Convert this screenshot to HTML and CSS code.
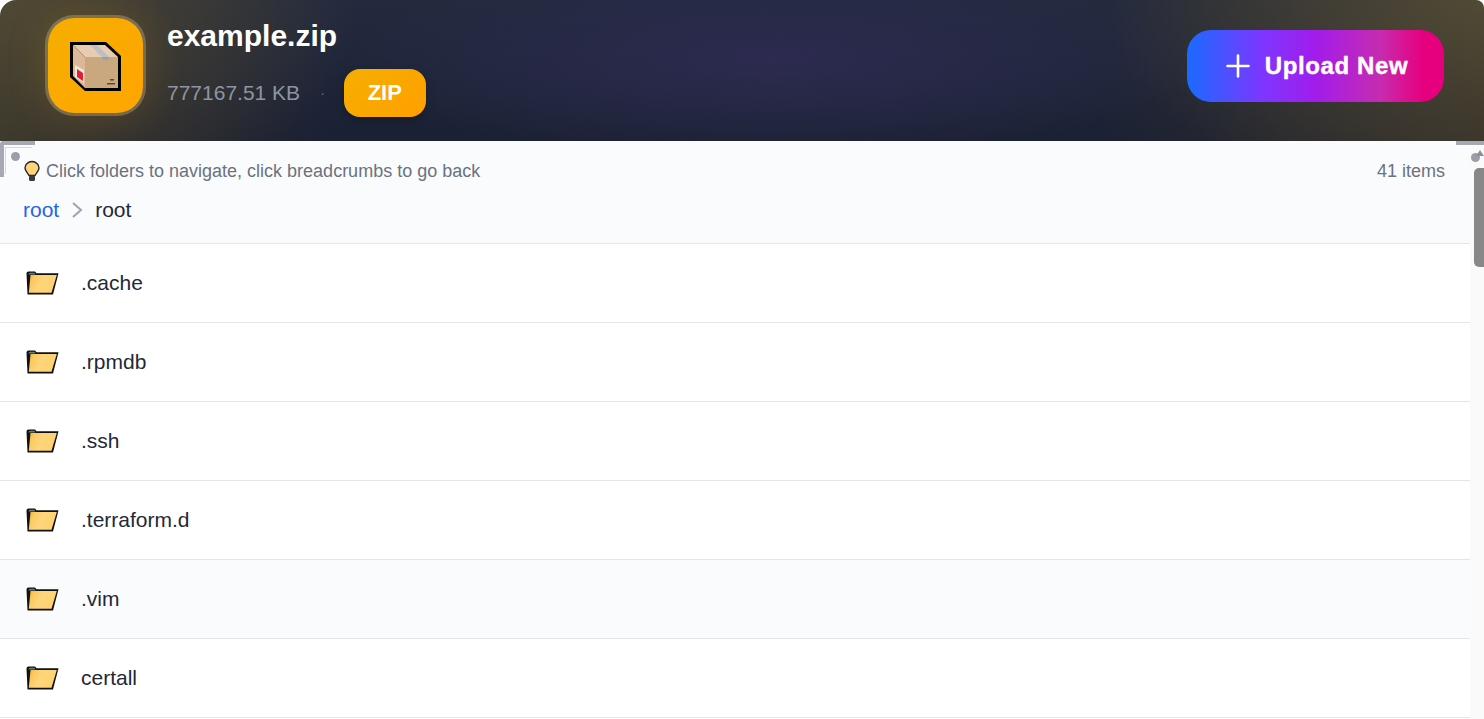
FILE: index.html
```html
<!DOCTYPE html>
<html>
    <head>
        <meta charset="UTF-8">
        <meta name="viewport" content="width=device-width, initial-scale=1.0">
        <title>example.zip</title>
        <link rel="stylesheet" href="styles.css">
    </head>
    <body>
        <!-- folder icon, reused by every row -->
        <svg class="defs" width="0" height="0">
            <defs>
                <linearGradient id="folder-fill" x1="0" y1="0" x2="1" y2="0.3">
                    <stop offset="0" stop-color="#eda733"/>
                    <stop offset="0.2" stop-color="#fbc95f"/>
                    <stop offset="0.5" stop-color="#fed57a"/>
                    <stop offset="1" stop-color="#fdd271"/>
                </linearGradient>
                <symbol id="folder" viewBox="0 0 34 26">
                    <path d="M1.500 3.500Q1.500 1.500 3.500 1.500H10L11.500 3.300H33.500L28 24.500H2.500Z" fill="#111"/>
                    <path d="M3.500 4.500Q3.500 2.700 5 2.700H9.500L10.500 4.500Z" fill="#5f8080"/>
                    <path d="M5.500 5H31.800L26.500 22.800H3.800Z" fill="url(#folder-fill)"/>
                </symbol>
            </defs>
        </svg>

        <header class="top">
            <div class="file-icon">
                <svg width="60" height="60" viewBox="0 0 60 60">
                    <polygon points="4,6 40,6 55,20 55,55 19,55 4,41" fill="#000"/>
                    <polygon points="7,9 39,9 52,21 19,21" fill="#e9cbaf"/>
                    <polygon points="7,9 19,21 19,52 7,40" fill="#dcb896"/>
                    <polygon points="19,21 52,21 52,52 19,52" fill="#c9a77f"/>
                    <polygon points="24,9 31,9 43,21 36,21" fill="#b9bfc4"/>
                    <rect x="36" y="21" width="7" height="3" fill="#9aa3aa"/>
                    <polygon points="9,29 18,34 18,47 9,41" fill="#f0e6dc"/>
                    <polygon points="11,33 17,37 17,45 11,41" fill="#dc2038"/>
                    <rect x="44" y="43" width="4" height="1.500" fill="#5a4a3a"/>
                    <rect x="41" y="47" width="8" height="1.500" fill="#5a4a3a"/>
                </svg>
            </div>
            <div class="file-info">
                <h1>example.zip</h1>
                <div class="meta">
                    <span class="size">777167.51 KB</span>
                    <span class="dot">·</span>
                    <span class="badge">ZIP</span>
                </div>
            </div>
            <button class="upload">
                <svg width="24" height="24" viewBox="0 0 24 24"><path d="M12 1.500V22.500M1.500 12H22.500" stroke="#fff" stroke-width="2.600" stroke-linecap="round"/></svg>
                Upload New
            </button>
        </header>

        <div class="page">
            <main class="browser">
                <div class="toolbar">
                    <div class="hint-row">
                        <span class="hint">
                            <svg width="18" height="22" viewBox="0 0 18 22">
                                <path d="M9 1.500C5 1.500 2 4.500 2 8C2 10.800 4.500 12.500 6 15.500H12C13.500 12.500 16 10.800 16 8C16 4.500 13 1.500 9 1.500Z" fill="#fdd47a" stroke="#222" stroke-width="1.400"/>
                                <rect x="6" y="15.500" width="6" height="5.500" rx="1.500" fill="#3a3a3a"/>
                            </svg>
                            Click folders to navigate, click breadcrumbs to go back
                        </span>
                        <span class="count">41 items</span>
                    </div>
                    <nav class="crumbs">
                        <a class="crumb-link">root</a>
                        <svg width="12" height="18" viewBox="0 0 12 18"><path d="M2 2L10 9L2 16" fill="none" stroke="#9ca3af" stroke-width="2"/></svg>
                        <span class="crumb-current">root</span>
                    </nav>
                </div>

                <div class="row">
                    <svg class="folder" width="34" height="26"><use href="#folder"/></svg>
                    <span>.cache</span>
                </div>
                <div class="row">
                    <svg class="folder" width="34" height="26"><use href="#folder"/></svg>
                    <span>.rpmdb</span>
                </div>
                <div class="row">
                    <svg class="folder" width="34" height="26"><use href="#folder"/></svg>
                    <span>.ssh</span>
                </div>
                <div class="row">
                    <svg class="folder" width="34" height="26"><use href="#folder"/></svg>
                    <span>.terraform.d</span>
                </div>
                <div class="row hovered">
                    <svg class="folder" width="34" height="26"><use href="#folder"/></svg>
                    <span>.vim</span>
                </div>
                <div class="row">
                    <svg class="folder" width="34" height="26"><use href="#folder"/></svg>
                    <span>certall</span>
                </div>
            </main>

            <div class="scrollbar"><div class="thumb"></div></div>

            <!-- the grey corner marks over the top of the panel -->
            <div class="mark-left"><i class="knob"></i></div>
            <div class="mark-right"><i class="knob"></i><i class="tip"></i></div>
        </div>
    </body>
</html>
```

FILE: styles.css
```css
* {
  box-sizing: border-box;
}

html, body {
  margin: 0;
  height: 719px;
  overflow: hidden;
  background: #fff;
  font-family: "Liberation Sans", Arial, sans-serif;
}

.defs {
  display: block;
}

.top {
  height: 141px;
  display: flex;
  align-items: center;
  padding: 0 40px 10px 45px;
  border-radius: 16px 8px 0 0;
  background:
    radial-gradient(ellipse 380px 210px at 1484px 0, rgba(92, 84, 58, 0.7), rgba(92, 84, 58, 0)),
    radial-gradient(ellipse 360px 220px at 0 0, rgba(88, 80, 54, 0.75), rgba(88, 80, 54, 0)),
    linear-gradient(90deg, rgba(58, 52, 38, 0.8) 0, rgba(58, 52, 38, 0) 22%, rgba(58, 52, 38, 0) 74%, rgba(58, 50, 36, 0.8) 100%),
    radial-gradient(ellipse 430px 100px at 52% 42%, #2c2b50, rgba(44, 43, 80, 0)),
    linear-gradient(180deg, #232a3e, #1b2134);
}

.file-icon {
  width: 101px;
  height: 101px;
  display: flex;
  align-items: center;
  justify-content: center;
  border: 3px solid rgba(255, 225, 150, 0.3);
  border-radius: 29px;
  background: linear-gradient(135deg, #f6ae00, #ffa500);
  background-clip: padding-box;
  box-shadow: 0 0 40px rgba(255, 170, 0, 0.16);
  flex-shrink: 0;
}

.file-info {
  margin-left: 21px;
  margin-top: 4px;
  color: #fff;
}

.file-info h1 {
  margin: 0;
  font-size: 30px;
  line-height: 36px;
  font-weight: 700;
}

.meta {
  display: flex;
  align-items: center;
  margin-top: 15px;
}

.size {
  font-size: 21px;
  color: #8e95a2;
}

.dot {
  margin: 0 19px 0 20px;
  font-size: 14px;
  color: #6b7280;
}

.badge {
  width: 82px;
  height: 48px;
  display: flex;
  align-items: center;
  justify-content: center;
  border-radius: 16px;
  background: linear-gradient(135deg, #f6ae00, #ffa000);
  font-size: 22px;
  font-weight: 700;
  box-shadow: 0 3px 8px rgba(0, 0, 0, 0.25);
}

.upload {
  width: 257px;
  height: 72px;
  margin-left: auto;
  padding: 0 0 0 3px;
  display: flex;
  align-items: center;
  justify-content: center;
  gap: 15px;
  border: 0;
  border-radius: 24px;
  background: linear-gradient(90deg, #1a6bff 0, #7f35ff 30%, #a21ceb 50%, #c62cb0 75%, #e6007e 92%);
  color: #fff;
  font-family: inherit;
  font-size: 24px;
  font-weight: 700;
  letter-spacing: 0.6px;
  -webkit-text-stroke: 0.4px #fff;
}

.page {
  height: 578px;
  display: flex;
  position: relative;
}

.browser {
  flex: 1;
}

.toolbar {
  height: 103px;
  padding: 19px 25px 0 23px;
  background: #fafbfd;
  border-bottom: 1px solid #e2e5e9;
}

.hint-row {
  display: flex;
  justify-content: space-between;
  align-items: center;
  font-size: 18px;
  color: #6b7280;
}

.hint {
  display: flex;
  align-items: center;
  gap: 5px;
}

.crumbs {
  display: flex;
  align-items: center;
  gap: 12px;
  margin-top: 16px;
  font-size: 21px;
}

.crumb-link {
  color: #2563eb;
}

.crumb-current {
  color: #1f2937;
}

.row {
  height: 79px;
  display: flex;
  align-items: center;
  gap: 22px;
  padding-left: 25px;
  border-bottom: 1px solid #e2e5e9;
  font-size: 21px;
  color: #1f2937;
  background: #fff;
}

.hovered {
  background: #fafbfd;
}

.scrollbar {
  width: 14px;
  padding: 27px 0 0 4px;
  background: #fafafa;
}

.thumb {
  height: 99px;
  background: #888;
  border-radius: 5px 0 0 5px;
}

.mark-left {
  position: absolute;
  left: 0;
  top: 0;
  width: 35px;
  height: 36px;
  border-top: 4px solid #a5a9b4;
  border-left: 4px solid #a5a9b4;
  border-top-left-radius: 4px;
}

.mark-left::after {
  content: "";
  position: absolute;
  left: 1px;
  top: 2px;
  width: 26px;
  height: 26px;
  border-top: 1px solid #d5d7dc;
  border-left: 1px solid #d5d7dc;
}

.mark-right {
  position: absolute;
  right: 0;
  top: 0;
  width: 28px;
  height: 4px;
  background: #a5a9b4;
}

.knob {
  position: absolute;
  width: 9px;
  height: 9px;
  border-radius: 50%;
  background: #9a9ea8;
}

.mark-left .knob {
  left: 7px;
  top: 7px;
}

.mark-right .knob {
  left: 15px;
  top: 12px;
}

.tip {
  position: absolute;
  left: 20px;
  top: 9px;
  border: 4px solid transparent;
  border-top: 0;
  border-bottom: 6px solid #8b8f99;
}
```
